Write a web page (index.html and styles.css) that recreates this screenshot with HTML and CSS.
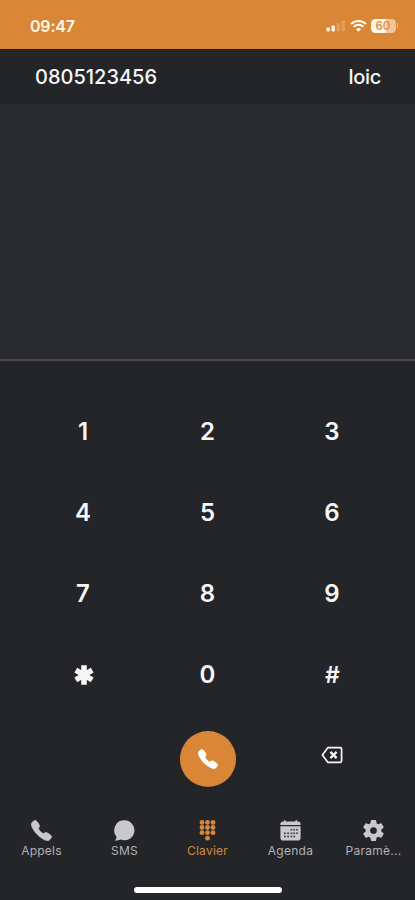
FILE: index.html
```
<!DOCTYPE html>
<html lang="fr">
<head>
<meta charset="utf-8">
<meta name="viewport" content="width=device-width, initial-scale=1">
<title>Clavier</title>
<link rel="stylesheet" href="styles.css">
</head>
<body>
<svg class="defs" aria-hidden="true">
  <symbol id="phone" viewBox="22 22 468 468">
    <path stroke="currentColor" stroke-width="18" d="M391 480c-19.52 0-46.94-7.06-88-30-49.93-28-88.55-53.85-138.21-103.38C116.91 298.77 93.61 267.79 61 208.45c-36.84-67-30.56-102.12-23.54-117.13C45.82 73.38 58.16 62.65 74.11 52a176.3 176.3 0 0128.64-15.2c1-.43 1.93-.84 2.76-1.21 4.95-2.23 12.45-5.6 21.95-2 6.34 2.38 12 7.25 20.86 16 18.17 17.92 43 57.83 52.16 77.43 6.15 13.21 10.22 21.93 10.23 31.71 0 11.45-5.76 20.28-12.75 29.81-1.31 1.79-2.61 3.5-3.87 5.16-7.61 10-9.28 12.89-8.18 18.05 2.23 10.37 18.86 41.24 46.19 68.51s57.31 42.85 67.72 45.07c5.38 1.15 8.33-.59 18.65-8.47 1.48-1.13 3-2.3 4.59-3.47 10.66-7.93 19.08-13.54 30.26-13.54h.06c9.73 0 18.06 4.22 31.86 11.18 18 9.08 59.11 33.59 77.14 51.78 8.77 8.84 13.66 14.48 16.05 20.81 3.6 9.53.21 17-2 22-.37.83-.78 1.74-1.21 2.75a176.49 176.49 0 01-15.29 28.58c-10.63 15.9-21.4 28.21-39.38 36.58A67.42 67.42 0 01391 480z"/>
  </symbol>
</svg>
<div class="app">
  <header class="status">
    <span class="time">09:47</span>
    <div class="indicators">
      <svg class="signal" width="20" height="12" viewBox="0 0 20 12">
        <rect x="0.5" y="7.5" width="3.4" height="4" rx="1"/>
        <rect x="5.5" y="5.5" width="3.4" height="6" rx="1"/>
        <rect class="dim" x="10.5" y="3" width="3.4" height="8.5" rx="1"/>
        <rect class="dim" x="15.5" y="0.5" width="3.4" height="11" rx="1"/>
      </svg>
      <svg class="wifi" width="17" height="12" viewBox="0 0 17 12">
        <path d="M8.5 11.8 5.9 9.2a3.7 3.7 0 0 1 5.2 0z"/>
        <path class="arc" d="M3.6 6.8a7 7 0 0 1 9.8 0M1 4.1a10.6 10.6 0 0 1 15 0"/>
      </svg>
      <div class="battery"><span class="level">60</span><i class="cap"></i></div>
    </div>
  </header>
  <section class="line"><span>0805123456</span><span class="user">loic</span></section>
  <section class="display"></section>
  <main class="pad">
    <div class="keys">
      <button>1</button><button>2</button><button>3</button>
      <button>4</button><button>5</button><button>6</button>
      <button>7</button><button>8</button><button>9</button>
      <button aria-label="*"><svg class="star" width="20" height="20" viewBox="0 0 20 20"><path d="M10 .3v19.4M1.8 5.2l16.4 9.6M1.8 14.8l16.4-9.6"/></svg></button><button>0</button><button class="hash">#</button>
    </div>
    <div class="actions">
      <button class="call" aria-label="Appeler"><svg width="20" height="20"><use href="#phone"/></svg></button>
      <button class="erase" aria-label="Effacer"><svg width="22" height="18" viewBox="0 0 22 18"><path d="M7 1.6h12a1.6 1.6 0 0 1 1.6 1.6v11.6a1.6 1.6 0 0 1-1.6 1.6H7L1.4 9z"/><path class="cross" d="m9.4 5.9 6.2 6.2m0-6.2-6.2 6.2"/></svg></button>
    </div>
  </main>
  <nav class="tabs">
    <a class="tab"><svg width="21" height="21"><use href="#phone"/></svg><span>Appels</span></a>
    <a class="tab"><svg width="21" height="21" viewBox="0 0 21 21"><path d="M10.7.3a10 10 0 1 1-4.2 19.2c-1.3.7-3.2 1.2-4.9 1.2-.5 0-.6-.5-.3-.8 1-1 1.3-2.2 1.1-3.4A10 10 0 0 1 10.7.3z"/></svg><span>SMS</span></a>
    <a class="tab active"><svg width="21" height="21" viewBox="0 0 21 21">
      <circle cx="5" cy="2.4" r="2.4"/><circle cx="10.5" cy="2.4" r="2.4"/><circle cx="16" cy="2.4" r="2.4"/>
      <circle cx="5" cy="7.5" r="2.4"/><circle cx="10.5" cy="7.5" r="2.4"/><circle cx="16" cy="7.5" r="2.4"/>
      <circle cx="5" cy="12.7" r="2.4"/><circle cx="10.5" cy="12.7" r="2.4"/><circle cx="16" cy="12.7" r="2.4"/>
      <circle cx="10.5" cy="18.2" r="2.4"/></svg><span>Clavier</span></a>
    <a class="tab"><svg width="21" height="21" viewBox="0 0 21 21">
      <path d="M3 1.5h1V.8a.8.8 0 0 1 1.6 0v.7h9.8V.8a.8.8 0 0 1 1.6 0v.7h1a2.6 2.6 0 0 1 2.6 2.6v.8H.4v-.8A2.6 2.6 0 0 1 3 1.5zM.4 6.3h20.2v11.5a2.8 2.8 0 0 1-2.8 2.8H3.2a2.8 2.8 0 0 1-2.8-2.8z"/>
      <path class="days" d="M11.4 9.8h.01M14.2 9.8h.01M17 9.8h.01M4.9 13.2h.01M8.1 13.2h.01M11.4 13.2h.01M14.2 13.2h.01M17 13.2h.01M4.9 16.6h.01M8.1 16.6h.01M11.4 16.6h.01M14.2 16.6h.01"/></svg><span>Agenda</span></a>
    <a class="tab"><svg width="21" height="21" viewBox="2 2 20 20"><path d="M19.43 12.98c.04-.32.07-.64.07-.98s-.03-.66-.07-.98l2.11-1.65c.19-.15.24-.42.12-.64l-2-3.46c-.12-.22-.39-.3-.61-.22l-2.49 1c-.52-.4-1.08-.73-1.69-.98l-.38-2.65A.488.488 0 0 0 14 2h-4c-.25 0-.46.18-.49.42l-.38 2.65c-.61.25-1.17.59-1.69.98l-2.49-1c-.23-.09-.49 0-.61.22l-2 3.46c-.13.22-.07.49.12.64l2.11 1.65c-.04.32-.07.65-.07.98s.03.66.07.98l-2.11 1.65c-.19.15-.24.42-.12.64l2 3.46c.12.22.39.3.61.22l2.49-1c.52.4 1.08.73 1.69.98l.38 2.65c.03.24.24.42.49.42h4c.25 0 .46-.18.49-.42l.38-2.65c.61-.25 1.17-.59 1.69-.98l2.49 1c.23.09.49 0 .61-.22l2-3.46c.12-.22.07-.49-.12-.64zM12 15.2a3.2 3.2 0 1 1 0-6.4 3.2 3.2 0 0 1 0 6.4z"/></svg><span>Paramè...</span></a>
  </nav>
  <footer class="home"><i></i></footer>
</div>
</body>
</html>
```
FILE: styles.css
```
* { box-sizing: border-box; }
body {
  margin: 0;
  background: #242529;
  color: #f6f6f7;
  font-family: Inter, "Liberation Sans", sans-serif;
}
button { border: 0; padding: 0; background: none; color: inherit; font: inherit; }
svg { display: block; fill: currentColor; }
.defs { position: absolute; width: 0; height: 0; }
.app { display: flex; flex-direction: column; height: 900px; overflow: hidden; }

.status {
  display: flex;
  align-items: center;
  justify-content: space-between;
  height: 50px;
  padding: 2px 17px 0 30px;
  background: #d98737;
  border-bottom: 1px solid #172023;
  color: #fff7ec;
}
.time { font-size: 16px; font-weight: 600; letter-spacing: -0.2px; }
.indicators { display: flex; align-items: center; gap: 4px; }
.dim { opacity: .22; }
.wifi .arc { fill: none; stroke: currentColor; stroke-width: 2.1; }
.battery { display: flex; align-items: center; gap: 1px; }
.level {
  width: 25px;
  height: 14px;
  border-radius: 4.5px;
  background: linear-gradient(90deg, #fff7ec 60%, #f0c79d 60%);
  color: #dc9450;
  font-size: 11.5px;
  font-weight: 600;
  line-height: 14px;
  text-align: center;
}
.cap { width: 1.5px; height: 5px; border-radius: 0 2px 2px 0; background: #ebb987; }

.line {
  display: flex;
  align-items: center;
  justify-content: space-between;
  height: 54px;
  padding: 0 34px 0 35px;
  font-size: 20px;
  font-weight: 500;
}
.user { letter-spacing: -0.3px; }
.display { height: 257px; background: #292a2b; border-bottom: 2px solid #4b4b4e; }

.pad { height: 448px; padding: 30px 20.75px 0; }
.keys {
  display: grid;
  grid-template-columns: repeat(3, 1fr);
  grid-auto-rows: 81px;
  font-size: 24px;
  font-weight: 600;
}
.keys button { display: flex; align-items: center; justify-content: center; }
.keys .hash { padding-left: 1px; font-size: 23px; }
.star { transform: translateX(1px); }
.star path { fill: none; stroke: currentColor; stroke-width: 5.6; }
.actions {
  display: grid;
  grid-template-columns: repeat(3, 1fr);
  justify-items: center;
  padding-top: 16px;
}
.call {
  grid-column: 2;
  display: flex;
  align-items: center;
  justify-content: center;
  width: 56px;
  height: 56px;
  border-radius: 50%;
  background: #d98737;
  color: #fff;
}
.erase { height: 48px; display: flex; align-items: center; }
.erase path { fill: none; stroke: currentColor; stroke-width: 1.7; stroke-linejoin: round; }
.erase .cross { stroke-width: 2.3; }

.tabs { display: grid; grid-template-columns: repeat(5, 1fr); height: 66px; padding-top: 11px; }
.tab {
  display: flex;
  flex-direction: column;
  align-items: center;
  gap: 3px;
  color: #c8c9ca;
}
.tab span { color: #b1b2b5; font-size: 12px; line-height: 14px; letter-spacing: .25px; }
.tab.active, .tab.active span { color: #d98737; }
.days { stroke: #48494c; stroke-width: 2; stroke-linecap: round; }

.home { display: flex; justify-content: center; padding-top: 12px; }
.home i { width: 148px; height: 6px; border-radius: 3px; background: #fff; }
```
